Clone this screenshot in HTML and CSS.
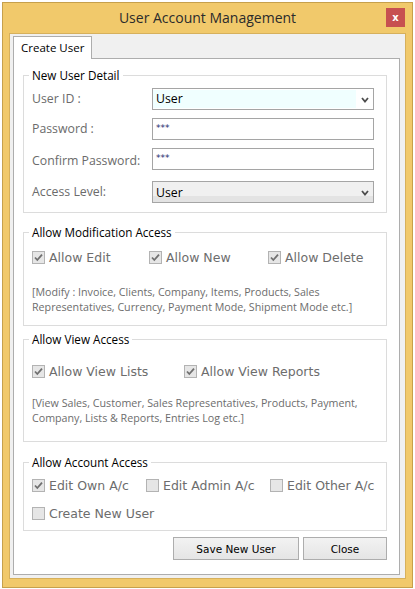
FILE: index.html
```html
<!DOCTYPE html>
<html lang="en">
<head>
    <meta charset="UTF-8">
    <title>User Account Management</title>
    <link rel="stylesheet" href="styles.css">
</head>
<body>

    <div class="window">
        <div class="titlebar">
            <span class="title">User Account Management</span>
            <button class="close-btn">x</button>
        </div>

        <div class="client">
            <div class="tabs">
                <div class="tab active">Create User</div>
            </div>

            <div class="tab-page">
                <!-- New user detail -->
                <fieldset class="group group-detail">
                    <legend>New User Detail</legend>
                    <div class="form-grid">
                        <label>User ID :</label>
                        <div class="combo combo-edit">
                            <span class="combo-text">User</span>
                            <svg class="chevron" viewBox="0 0 8 6"><path d="M1 1 L4 4.5 L7 1"/></svg>
                        </div>

                        <label>Password :</label>
                        <div class="textbox">***</div>

                        <label class="label-confirm">Confirm Password:</label>
                        <div class="textbox">***</div>

                        <label class="row-last">Access Level:</label>
                        <div class="combo combo-list row-last">
                            <span class="combo-text">User</span>
                            <svg class="chevron" viewBox="0 0 8 6"><path d="M1 1 L4 4.5 L7 1"/></svg>
                        </div>
                    </div>
                </fieldset>

                <!-- Modification access -->
                <fieldset class="group group-modify">
                    <legend>Allow Modification Access</legend>
                    <div class="options cols-modify">
                        <div class="opt">
                            <svg class="chk" viewBox="0 0 13 13"><rect x="0.5" y="0.5" width="12" height="12"/><path d="M3 6.5 L5.3 9 L10 3.6"/></svg>
                            <span>Allow Edit</span>
                        </div>
                        <div class="opt">
                            <svg class="chk" viewBox="0 0 13 13"><rect x="0.5" y="0.5" width="12" height="12"/><path d="M3 6.5 L5.3 9 L10 3.6"/></svg>
                            <span>Allow New</span>
                        </div>
                        <div class="opt">
                            <svg class="chk" viewBox="0 0 13 13"><rect x="0.5" y="0.5" width="12" height="12"/><path d="M3 6.5 L5.3 9 L10 3.6"/></svg>
                            <span>Allow Delete</span>
                        </div>
                    </div>
                    <p class="note note-modify">[Modify : Invoice, Clients, Company, Items, Products, Sales<br>Representatives, Currency, Payment Mode, Shipment Mode etc.]</p>
                </fieldset>

                <!-- View access -->
                <fieldset class="group group-view">
                    <legend>Allow View Access</legend>
                    <div class="options cols-view">
                        <div class="opt">
                            <svg class="chk" viewBox="0 0 13 13"><rect x="0.5" y="0.5" width="12" height="12"/><path d="M3 6.5 L5.3 9 L10 3.6"/></svg>
                            <span>Allow View Lists</span>
                        </div>
                        <div class="opt">
                            <svg class="chk" viewBox="0 0 13 13"><rect x="0.5" y="0.5" width="12" height="12"/><path d="M3 6.5 L5.3 9 L10 3.6"/></svg>
                            <span>Allow View Reports</span>
                        </div>
                    </div>
                    <p class="note note-view">[View Sales, Customer, Sales Representatives, Products, Payment,<br>Company, Lists &amp; Reports, Entries Log etc.]</p>
                </fieldset>

                <!-- Account access -->
                <fieldset class="group group-account">
                    <legend>Allow Account Access</legend>
                    <div class="options cols-account">
                        <div class="opt">
                            <svg class="chk" viewBox="0 0 13 13"><rect x="0.5" y="0.5" width="12" height="12"/><path d="M3 6.5 L5.3 9 L10 3.6"/></svg>
                            <span>Edit Own A/c</span>
                        </div>
                        <div class="opt">
                            <svg class="chk" viewBox="0 0 13 13"><rect x="0.5" y="0.5" width="12" height="12"/></svg>
                            <span>Edit Admin A/c</span>
                        </div>
                        <div class="opt">
                            <svg class="chk" viewBox="0 0 13 13"><rect x="0.5" y="0.5" width="12" height="12"/></svg>
                            <span>Edit Other A/c</span>
                        </div>
                        <div class="opt">
                            <svg class="chk" viewBox="0 0 13 13"><rect x="0.5" y="0.5" width="12" height="12"/></svg>
                            <span>Create New User</span>
                        </div>
                    </div>
                </fieldset>

                <div class="actions">
                    <button class="btn btn-save">Save New User</button>
                    <button class="btn btn-close">Close</button>
                </div>
            </div>
        </div>
    </div>

</body>
</html>
```

FILE: styles.css
```css
/* --- Theme --- */
:root {
    --frame: #f1c96b;
    --frame-edge: #c6a04c;
    --client-bg: #f0f0f0;
    --panel-border: #adadad;
    --group-border: #dcdcdc;
    --label: #6b6b6b;
    --ui-font: "Open Sans", "Noto Sans", sans-serif;
    --ctl-font: "DejaVu Sans", "Liberation Sans", sans-serif;
}

* {
    box-sizing: border-box;
}

body {
    margin: 0;
    background: #ffffff;
    font-family: var(--ui-font);
}

/* --- Window frame --- */
.window {
    width: 411px;
    height: 586px;
    margin: 2px 0 0 2px;
    border: 1px solid var(--frame-edge);
    background: var(--frame);
    padding: 0 6px 8px 6px;
}

.titlebar {
    height: 30px;
    margin: 0 -6px;
    display: grid;
    grid-template-columns: 1fr auto 1fr;
    align-items: center;
}

.title {
    grid-column: 2;
    font-size: 14px;
    color: #2b2b2b;
    line-height: 20px;
}

.close-btn {
    grid-column: 3;
    justify-self: end;
    align-self: start;
    width: 19px;
    height: 19px;
    margin: 5px 7px 0 0;
    padding: 0;
    border: none;
    background: #c75050;
    color: #ffffff;
    font-family: var(--ctl-font);
    font-weight: bold;
    font-size: 10px;
    line-height: 17px;
}

.client {
    height: 546px;
    border: 1px solid #d6b05c;
    background: var(--client-bg);
    padding: 2px 5px 0 3px;
}

/* --- Tabs --- */
.tabs {
    display: flex;
}

.tab {
    position: relative;
    z-index: 1;
    width: 79px;
    height: 23px;
    margin-bottom: -1px;
    border: 1px solid var(--panel-border);
    border-bottom: none;
    background: #ffffff;
    font-size: 11.5px;
    line-height: 21px;
    padding-left: 7px;
    color: #000;
}

.tab-page {
    height: 517px;
    border: 1px solid var(--panel-border);
    background: #ffffff;
    padding: 8px 12px 0 9px;
}

/* --- Group boxes --- */
.group {
    margin: 0;
    min-width: 0;
    border: 1px solid var(--group-border);
    padding: 0 12px 9px 8px;
}

.group legend {
    padding: 0 3px;
    margin-left: -3px;
    font-size: 11.7px;
    line-height: 16px;
    color: #000;
}

.group-detail { padding-top: 5px; }
.group-modify { margin-top: 11px; padding-top: 9px; padding-bottom: 10px; }
.group-view { margin-top: 5px; padding-top: 16px; padding-bottom: 15px; }
.group-account { margin-top: 12px; padding-top: 7px; padding-bottom: 9px; }

/* --- Form rows --- */
.form-grid {
    display: grid;
    grid-template-columns: 120px 222px;
    grid-template-rows: 22px 22px 22px 25px;
    row-gap: 8px;
    align-items: center;
}

.form-grid label {
    font-size: 12.3px;
    line-height: 22px;
    color: var(--label);
}

.form-grid .label-confirm {
    margin-top: 4px;
}

.form-grid .row-last {
    align-self: end;
}

.textbox {
    height: 22px;
    border: 1px solid #a5a5a5;
    background: #ffffff;
    font-family: var(--ctl-font);
    font-size: 9px;
    color: #1e2a6e;
    padding: 3px 0 0 3px;
    line-height: 12px;
}

.combo {
    height: 22px;
    display: flex;
    align-items: center;
    border: 1px solid #a5a5a5;
    padding: 1px 4px 0 0;
}

.combo-text {
    flex: 1;
    font-size: 12.3px;
    color: #000;
    padding-left: 3px;
}

.combo-edit {
    background: #ffffff;
    align-items: flex-start;
}

.combo-edit .combo-text {
    flex: 0 0 203px;
    height: 18px;
    line-height: 18px;
    background: #f0ffff;
}

.combo-edit .chevron {
    margin: 7px 0 0 auto;
}

.combo-list {
    background: linear-gradient(#f0f0f0 0, #f0f0f0 72%, #e3e3e3 72%);
}

.chevron {
    width: 8px;
    height: 6px;
    fill: none;
    stroke: #4d4d4d;
    stroke-width: 1.8;
}

/* --- Checkbox options --- */
.options {
    display: grid;
    grid-auto-rows: 16px;
    row-gap: 12px;
}

.cols-modify { grid-template-columns: 117px 119px auto; }
.cols-view { grid-template-columns: 152px auto; }
.cols-account { grid-template-columns: 114px 124px auto; }

.opt {
    display: flex;
    align-items: center;
    gap: 4px;
    font-family: var(--ctl-font);
    font-size: 12.5px;
    color: #6d6d6d;
    white-space: nowrap;
}

.chk {
    width: 13px;
    height: 13px;
    flex: none;
}

.chk rect {
    fill: #e6e6e6;
    stroke: #b3b3b3;
}

.chk path {
    fill: none;
    stroke: #707070;
    stroke-width: 1.8;
}

.note {
    margin: 0;
    font-size: 10.7px;
    line-height: 15px;
    color: #6d6d6d;
}

.note-modify { margin-top: 20px; }
.note-view { margin-top: 17px; }

/* --- Buttons --- */
.actions {
    display: flex;
    justify-content: flex-end;
    gap: 4px;
    margin-top: 6px;
}

.btn {
    height: 23px;
    border: 1px solid #adadad;
    background: linear-gradient(#f2f2f2, #e5e5e5);
    font-family: var(--ctl-font);
    font-size: 10.5px;
    color: #000;
    padding: 0;
}

.btn-save { width: 126px; }
.btn-close { width: 84px; }
```
